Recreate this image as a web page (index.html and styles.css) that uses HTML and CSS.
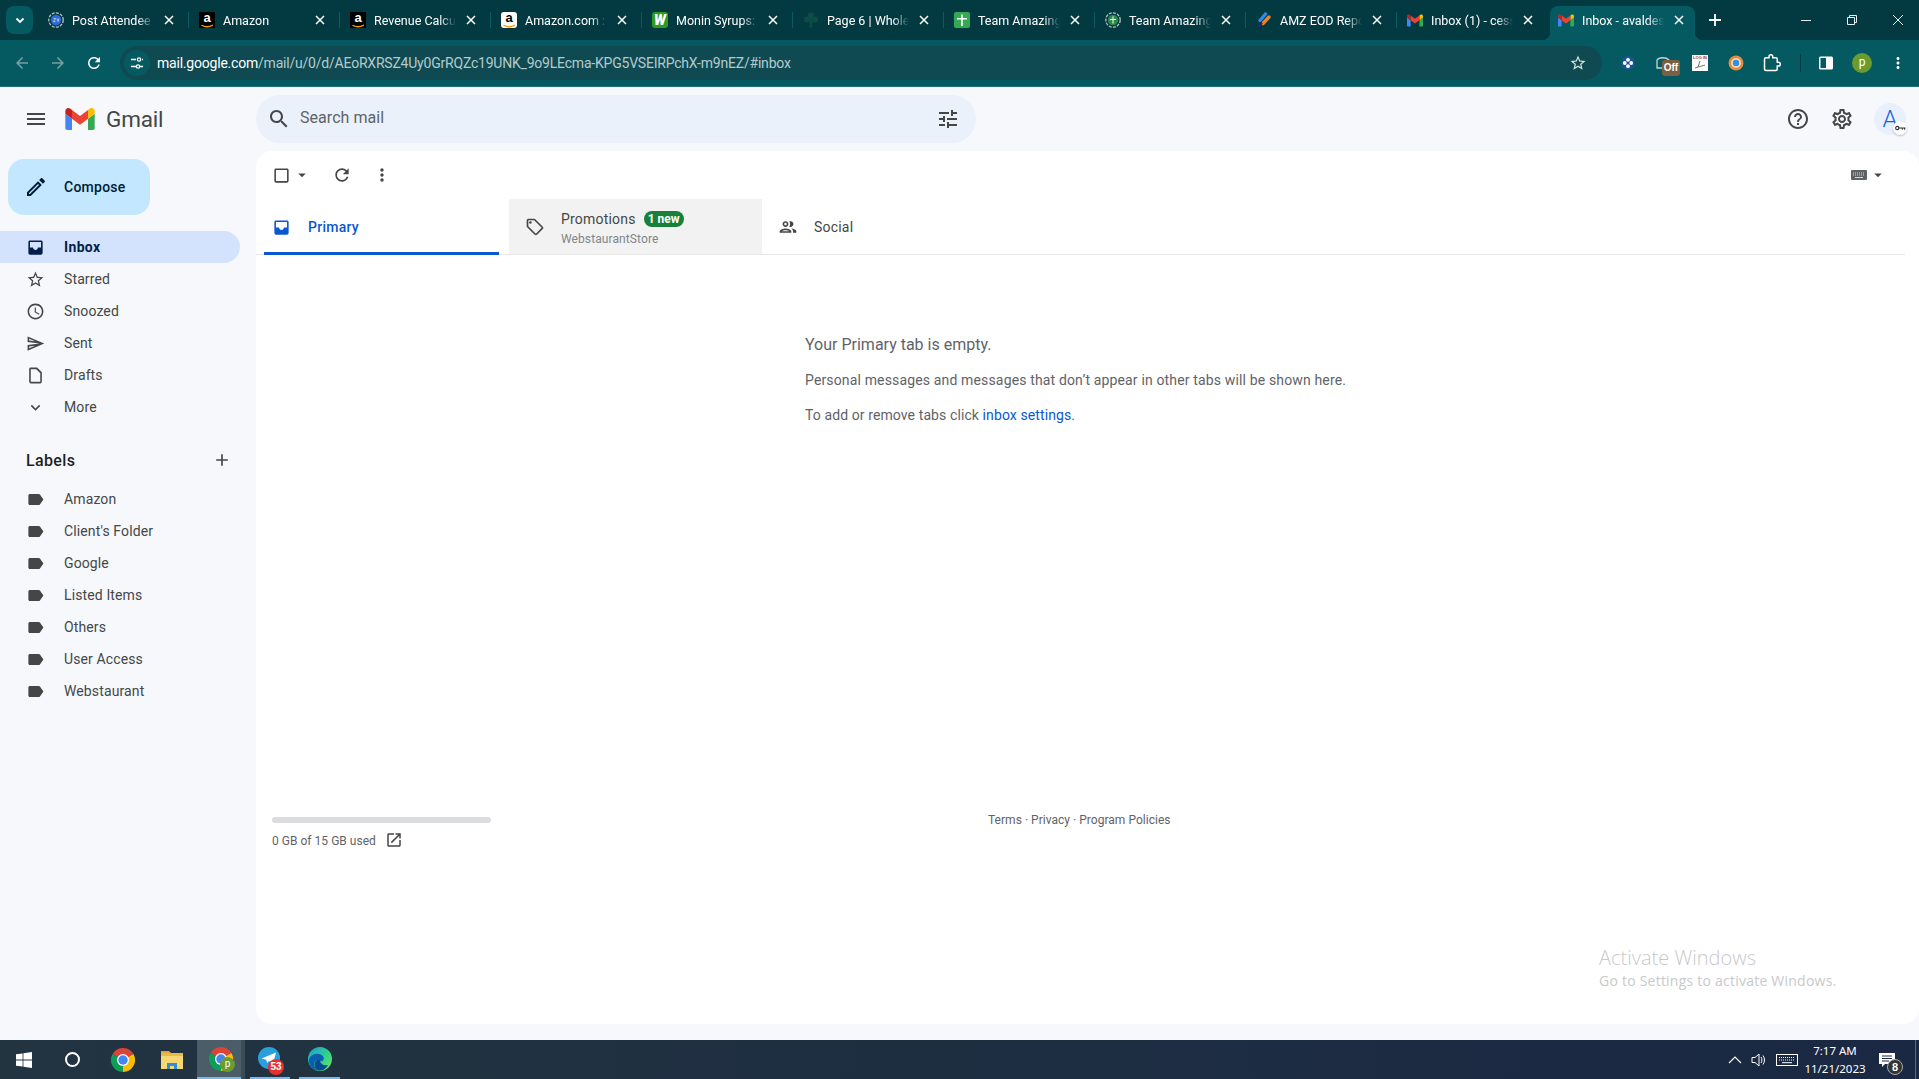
FILE: index.html
```html
<!DOCTYPE html>
<html lang="en">
<head>
<meta charset="utf-8">
<title>Inbox - Gmail</title>
<link rel="stylesheet" href="styles.css">
</head>
<body>
<svg class="sprite" xmlns="http://www.w3.org/2000/svg">
  <symbol id="i-m" viewBox="52 42 88 66"><path fill="#4285f4" d="M58 108h14V74L52 59v43c0 3.32 2.69 6 6 6"/><path fill="#34a853" d="M120 108h14c3.32 0 6-2.69 6-6V59l-20 15"/><path fill="#fbbc04" d="M120 48v26l20-15v-8c0-7.42-8.47-11.65-14.4-7.2"/><path fill="#ea4335" d="M72 74V48l24 18 24-18v26L96 92"/><path fill="#c5221f" d="M52 51v8l20 15V48l-5.6-4.2c-5.94-4.45-14.4-.22-14.4 7.2"/></symbol>
  <symbol id="i-chrome" viewBox="0 0 48 48"><path fill="#db4437" d="M24 24 3.2 12A24 24 0 0 1 44.8 12Z"/><path fill="#fbbc04" d="M24 24 44.8 12A24 24 0 0 1 24 48Z"/><path fill="#0f9d58" d="M24 24 24 48A24 24 0 0 1 3.2 12Z"/><circle cx="24" cy="24" r="12" fill="#fff"/><circle cx="24" cy="24" r="9.5" fill="#4285f4"/></symbol>
  <symbol id="i-x" viewBox="0 0 12 12"><path d="M2 2l8 8M10 2l-8 8" stroke="currentColor" stroke-width="1.5" fill="none"/></symbol>
  <symbol id="i-amz" viewBox="0 0 16 16"><path d="M2.5 13.2c3.5 2 7.5 2 11 0" stroke="#f90" stroke-width="1.3" fill="none"/><path d="M13.6 12.2l.4 2-1.9-.3" fill="#f90"/></symbol>
  <symbol id="i-menu" viewBox="0 0 24 24"><path d="M3 18h18v-2H3v2zm0-5h18v-2H3v2zm0-7v2h18V6H3z"/></symbol>
  <symbol id="i-search" viewBox="0 0 24 24"><path d="M15.5 14h-.79l-.28-.27C15.41 12.59 16 11.11 16 9.5 16 5.91 13.09 3 9.5 3S3 5.91 3 9.5 5.91 16 9.5 16c1.61 0 3.09-.59 4.23-1.57l.27.28v.79l5 4.99L20.49 19l-4.99-5zm-6 0C7.01 14 5 11.99 5 9.5S7.01 5 9.5 5 14 7.01 14 9.5 11.99 14 9.5 14z"/></symbol>
  <symbol id="i-tune" viewBox="0 0 24 24"><path d="M3 17v2h6v-2H3zM3 5v2h10V5H3zm10 16v-2h8v-2h-8v-2h-2v6h2zM7 9v2H3v2h4v2h2V9H7zm14 4v-2H11v2h10zm-6-4h2V7h4V5h-4V3h-2v6z"/></symbol>
  <symbol id="i-edit" viewBox="0 0 24 24"><path d="M14.06 9.02l.92.92L5.92 19H5v-.92l9.06-9.06M17.66 3c-.25 0-.51.1-.7.29l-1.83 1.83 3.75 3.75 1.83-1.83c.39-.39.39-1.02 0-1.41l-2.34-2.34c-.2-.2-.45-.29-.71-.29zm-3.6 3.19L3 17.25V21h3.75L17.81 9.94l-3.75-3.75z"/></symbol>
  <symbol id="i-inbox" viewBox="0 0 24 24"><path d="M19 3H5c-1.1 0-2 .9-2 2v14c0 1.1.9 2 2 2h14c1.1 0 2-.9 2-2V5c0-1.1-.9-2-2-2zm0 9h-4c0 1.66-1.35 3-3 3s-3-1.34-3-3H5V5h14v7z"/></symbol>
  <symbol id="i-star" viewBox="0 0 24 24"><path d="M22 9.24l-7.19-.62L12 2 9.19 8.63 2 9.24l5.46 4.73L5.82 21 12 17.27 18.18 21l-1.63-7.03L22 9.24zM12 15.4l-3.76 2.27 1-4.28-3.32-2.88 4.38-.38L12 6.1l1.71 4.04 4.38.38-3.32 2.88 1 4.28L12 15.4z"/></symbol>
  <symbol id="i-clock" viewBox="0 0 24 24"><path d="M11.99 2C6.47 2 2 6.48 2 12s4.47 10 9.99 10C17.52 22 22 17.52 22 12S17.52 2 11.99 2zM12 20c-4.42 0-8-3.58-8-8s3.58-8 8-8 8 3.58 8 8-3.58 8-8 8zm.5-13H11v6l5.25 3.15.75-1.23-4.5-2.67z"/></symbol>
  <symbol id="i-send" viewBox="0 0 24 24"><path d="M4.01 6.03l7.51 3.22-7.52-1 .01-2.22m7.5 8.72L4 17.97v-2.22l7.51-1M2.01 3L2 10l15 2-15 2 .01 7L23 12 2.01 3z"/></symbol>
  <symbol id="i-draft" viewBox="0 0 24 24"><path d="M6 2c-1.1 0-2 .9-2 2v16c0 1.1.9 2 2 2h12c1.1 0 2-.9 2-2V8l-6-6H6zm0 2h7l5 5v11H6V4z"/></symbol>
  <symbol id="i-more" viewBox="0 0 24 24"><path d="M16.59 8.59L12 13.17 7.41 8.59 6 10l6 6 6-6z"/></symbol>
  <symbol id="i-add" viewBox="0 0 24 24"><path d="M19 13h-6v6h-2v-6H5v-2h6V5h2v6h6v2z"/></symbol>
  <symbol id="i-label" viewBox="0 0 24 24"><path d="M17.63 5.84C17.27 5.33 16.67 5 16 5L5 5.01C3.9 5.01 3 5.9 3 7v10c0 1.1.9 1.99 2 1.99L16 19c.67 0 1.27-.33 1.63-.84L22 12l-4.37-6.16z"/></symbol>
  <symbol id="i-refresh" viewBox="0 0 24 24"><path d="M17.65 6.35C16.2 4.9 14.21 4 12 4c-4.42 0-7.99 3.58-7.99 8s3.57 8 7.99 8c3.73 0 6.84-2.55 7.73-6h-2.08c-.82 2.33-3.04 4-5.65 4-3.31 0-6-2.69-6-6s2.69-6 6-6c1.66 0 3.14.69 4.22 1.78L13 11h7V4l-2.35 2.35z"/></symbol>
  <symbol id="i-vert" viewBox="0 0 24 24"><path d="M12 8c1.1 0 2-.9 2-2s-.9-2-2-2-2 .9-2 2 .9 2 2 2zm0 2c-1.1 0-2 .9-2 2s.9 2 2 2 2-.9 2-2-.9-2-2-2zm0 6c-1.1 0-2 .9-2 2s.9 2 2 2 2-.9 2-2-.9-2-2-2z"/></symbol>
  <symbol id="i-check" viewBox="0 0 24 24"><path d="M19 5v14H5V5h14m0-2H5c-1.1 0-2 .9-2 2v14c0 1.1.9 2 2 2h14c1.1 0 2-.9 2-2V5c0-1.1-.9-2-2-2z"/></symbol>
  <symbol id="i-drop" viewBox="0 0 24 24"><path d="M7 10l5 5 5-5z"/></symbol>
  <symbol id="i-tag" viewBox="0 0 24 24"><path d="M21.41 11.58l-9-9C12.05 2.22 11.55 2 11 2H4c-1.1 0-2 .9-2 2v7c0 .55.22 1.05.59 1.42l9 9c.36.36.86.58 1.41.58s1.05-.22 1.41-.59l7-7c.37-.36.59-.86.59-1.41s-.23-1.06-.59-1.42zM13 20.01L4 11V4h7v-.01l9 9-7 7.02z"/><circle cx="6.5" cy="6.5" r="1.5"/></symbol>
  <symbol id="i-people" viewBox="0 0 24 24"><path d="M9 13.75c-2.34 0-7 1.17-7 3.5V19h14v-1.75c0-2.33-4.66-3.5-7-3.5zM4.34 17c.84-.58 2.87-1.25 4.66-1.25s3.82.67 4.66 1.25H4.34zM9 12c1.93 0 3.5-1.57 3.5-3.5S10.93 5 9 5 5.5 6.57 5.5 8.5 7.07 12 9 12zm0-5c.83 0 1.5.67 1.5 1.5S9.83 10 9 10s-1.5-.67-1.5-1.5S8.17 7 9 7zm7.04 6.81c1.16.84 1.96 1.96 1.96 3.44V19h4v-1.75c0-2.02-3.5-3.17-5.96-3.44zM15 12c1.93 0 3.5-1.57 3.5-3.5S16.93 5 15 5c-.54 0-1.04.13-1.5.35.63.89 1 1.98 1 3.15s-.37 2.26-1 3.15c.46.22.96.35 1.5.35z"/></symbol>
  <symbol id="i-help" viewBox="0 0 24 24"><path d="M11 18h2v-2h-2v2zm1-16C6.48 2 2 6.48 2 12s4.48 10 10 10 10-4.48 10-10S17.52 2 12 2zm0 18c-4.41 0-8-3.59-8-8s3.59-8 8-8 8 3.59 8 8-3.59 8-8 8zm0-14c-2.21 0-4 1.79-4 4h2c0-1.1.9-2 2-2s2 .9 2 2c0 2-3 1.75-3 5h2c0-2.25 3-2.5 3-5 0-2.21-1.79-4-4-4z"/></symbol>
  <symbol id="i-gear" viewBox="0 0 24 24"><path d="M19.43 12.98c.04-.32.07-.64.07-.98 0-.34-.03-.66-.07-.98l2.11-1.65c.19-.15.24-.42.12-.64l-2-3.46c-.09-.16-.26-.25-.44-.25-.06 0-.12.01-.17.03l-2.49 1c-.52-.4-1.08-.73-1.69-.98l-.38-2.65C14.46 2.18 14.25 2 14 2h-4c-.25 0-.46.18-.49.42l-.38 2.65c-.61.25-1.17.59-1.69.98l-2.49-1c-.06-.02-.12-.03-.18-.03-.17 0-.34.09-.43.25l-2 3.46c-.13.22-.07.49.12.64l2.11 1.65c-.04.32-.07.65-.07.98 0 .33.03.66.07.98l-2.11 1.65c-.19.15-.24.42-.12.64l2 3.46c.09.16.26.25.44.25.06 0 .12-.01.17-.03l2.49-1c.52.4 1.08.73 1.69.98l.38 2.65c.03.24.24.42.49.42h4c.25 0 .46-.18.49-.42l.38-2.65c.61-.25 1.17-.59 1.69-.98l2.49 1c.06.02.12.03.18.03.17 0 .34-.09.43-.25l2-3.46c.12-.22.07-.49-.12-.64l-2.11-1.65zm-1.98-1.71c.04.31.05.52.05.73 0 .21-.02.43-.05.73l-.14 1.13.89.7 1.08.84-.7 1.21-1.27-.51-1.04-.42-.9.68c-.43.32-.84.56-1.25.73l-1.06.43-.16 1.13-.2 1.35h-1.4l-.19-1.35-.16-1.13-1.06-.43c-.43-.18-.83-.41-1.23-.71l-.91-.7-1.06.43-1.27.51-.7-1.21 1.08-.84.89-.7-.14-1.13c-.03-.31-.05-.54-.05-.74s.02-.43.05-.73l.14-1.13-.89-.7-1.08-.84.7-1.21 1.27.51 1.04.42.9-.68c.43-.32.84-.56 1.25-.73l1.06-.43.16-1.13.2-1.35h1.39l.19 1.35.16 1.13 1.06.43c.43.18.83.41 1.23.71l.91.7 1.06-.43 1.27-.51.7 1.21-1.07.85-.89.7.14 1.13zM12 8c-2.21 0-4 1.79-4 4s1.79 4 4 4 4-1.79 4-4-1.79-4-4-4zm0 6c-1.1 0-2-.9-2-2s.9-2 2-2 2 .9 2 2-.9 2-2 2z"/></symbol>
  <symbol id="i-open" viewBox="0 0 24 24"><path d="M19 19H5V5h7V3H5c-1.11 0-2 .9-2 2v14c0 1.1.89 2 2 2h14c1.1 0 2-.9 2-2v-7h-2v7zM14 3v2h3.59l-9.83 9.83 1.41 1.41L19 6.41V10h2V3h-7z"/></symbol>
  <symbol id="i-back" viewBox="0 0 24 24"><path d="M20 11H7.83l5.59-5.59L12 4l-8 8 8 8 1.41-1.41L7.83 13H20v-2z"/></symbol>
  <symbol id="i-fwd" viewBox="0 0 24 24"><path d="M12 4l-1.41 1.41L16.17 11H4v2h12.17l-5.58 5.59L12 20l8-8z"/></symbol>
</svg>

<div class="tabstrip">
  <div class="tab-search"><svg class="caret-w" viewBox="0 0 12 12"><path d="M2.5 4.5 6 8l3.5-3.5" stroke="#fff" stroke-width="1.8" fill="none"/></svg></div>

  <div class="tab">
    <svg class="fav" viewBox="0 0 16 16"><circle cx="8" cy="8" r="7.2" fill="none" stroke="#b8c2c6" stroke-width="1.3" stroke-dasharray="3 1.2"/><circle cx="8" cy="8" r="5.2" fill="#2d6bd6"/><path d="M5.5 6.5h2l-2 3h2M9 6.5l1 3 1-3" stroke="#dfe8fb" stroke-width=".7" fill="none"/></svg>
    <span class="tab-title">Post Attendee -</span>
    <svg class="tab-x"><use href="#i-x"/></svg><span class="tab-sep"></span>
  </div>
  <div class="tab">
    <span class="fav fav-amz"><span class="fav-a">a</span><svg class="fav-smile"><use href="#i-amz"/></svg></span>
    <span class="tab-title">Amazon</span>
    <svg class="tab-x"><use href="#i-x"/></svg><span class="tab-sep"></span>
  </div>
  <div class="tab">
    <span class="fav fav-amz"><span class="fav-a">a</span><svg class="fav-smile"><use href="#i-amz"/></svg></span>
    <span class="tab-title">Revenue Calcul</span>
    <svg class="tab-x"><use href="#i-x"/></svg><span class="tab-sep"></span>
  </div>
  <div class="tab">
    <span class="fav fav-amz fav-amz-light"><span class="fav-a">a</span><svg class="fav-smile"><use href="#i-amz"/></svg></span>
    <span class="tab-title">Amazon.com : I</span>
    <svg class="tab-x"><use href="#i-x"/></svg><span class="tab-sep"></span>
  </div>
  <div class="tab">
    <span class="fav fav-w">W</span>
    <span class="tab-title">Monin Syrups: I</span>
    <svg class="tab-x"><use href="#i-x"/></svg><span class="tab-sep"></span>
  </div>
  <div class="tab">
    <svg class="fav" viewBox="0 0 16 16"><g fill="#0c4d45"><circle cx="8" cy="3.6" r="3"/><circle cx="4" cy="7.6" r="3"/><circle cx="12" cy="7.6" r="3"/><circle cx="8" cy="8" r="3"/><path d="M7.2 9h1.6l.8 6.5H6.4z"/></g></svg>
    <span class="tab-title">Page 6 | Whole</span>
    <svg class="tab-x"><use href="#i-x"/></svg><span class="tab-sep"></span>
  </div>
  <div class="tab">
    <svg class="fav" viewBox="0 0 16 16"><rect width="16" height="16" rx="2" fill="#34a853"/><path d="M7.2 2.5h1.6V6H13v1.6H8.8V14H7.2V7.6H3V6h4.2z" fill="#fff"/></svg>
    <span class="tab-title">Team Amazing</span>
    <svg class="tab-x"><use href="#i-x"/></svg><span class="tab-sep"></span>
  </div>
  <div class="tab">
    <svg class="fav" viewBox="0 0 16 16"><circle cx="8" cy="8" r="7.2" fill="none" stroke="#b8c2c6" stroke-width="1.3" stroke-dasharray="3 1.2"/><circle cx="8" cy="8" r="5.2" fill="#2c8a4a"/><path d="M7.5 4.5h1V7H11v1H8.5v3.5h-1V8H5V7h2.5z" fill="#fff"/></svg>
    <span class="tab-title">Team Amazing</span>
    <svg class="tab-x"><use href="#i-x"/></svg><span class="tab-sep"></span>
  </div>
  <div class="tab">
    <svg class="fav" viewBox="0 0 16 16"><path d="M4 8.5 9.5 2" stroke="#2b8ce6" stroke-width="3.4" stroke-linecap="round"/><path d="M7 11.5 13 5" stroke="#f58220" stroke-width="3.4" stroke-linecap="round"/><path d="M2 14.5l3-3" stroke="#1c2a66" stroke-width="3" stroke-linecap="round"/></svg>
    <span class="tab-title">AMZ EOD Repo</span>
    <svg class="tab-x"><use href="#i-x"/></svg><span class="tab-sep"></span>
  </div>
  <div class="tab">
    <svg class="fav fav-m"><use href="#i-m"/></svg>
    <span class="tab-title">Inbox (1) - cess</span>
    <svg class="tab-x"><use href="#i-x"/></svg><span class="tab-sep tab-sep-off"></span>
  </div>
  <div class="tab tab-active">
    <svg class="fav fav-m"><use href="#i-m"/></svg>
    <span class="tab-title">Inbox - avaldes</span>
    <svg class="tab-x"><use href="#i-x"/></svg>
  </div>
  <svg class="tab-new" viewBox="0 0 16 16"><path d="M8 2v12M2 8h12" stroke="#fff" stroke-width="1.8"/></svg>
  <div class="win-controls">
    <svg class="win-icon" viewBox="0 0 12 12"><path d="M1 6.5h10" stroke="#e6eeee" stroke-width="1"/></svg>
    <svg class="win-icon" viewBox="0 0 12 12"><path d="M3.5 3V1.5h7v7H9M1.5 3.5h7v7h-7z" stroke="#e6eeee" stroke-width="1" fill="none"/></svg>
    <svg class="win-icon" viewBox="0 0 12 12"><path d="M1 1l10 10M11 1 1 11" stroke="#e6eeee" stroke-width="1"/></svg>
  </div>
</div>

<div class="toolbar">
  <svg class="nav-ico nav-dim"><use href="#i-back"/></svg>
  <svg class="nav-ico nav-dim"><use href="#i-fwd"/></svg>
  <svg class="nav-ico"><use href="#i-refresh"/></svg>
  <div class="omnibox">
    <span class="site-info"><svg viewBox="0 0 16 16" class="site-ico"><path d="M2 4.5h5M11 11.5h3M7 11.5H2M14 4.5h-1" stroke="#fff" stroke-width="1.3" fill="none"/><circle cx="10" cy="4.5" r="1.7" stroke="#fff" stroke-width="1.2" fill="none"/><circle cx="9" cy="11.5" r="1.7" stroke="#fff" stroke-width="1.2" fill="none"/></svg></span>
    <span class="url"><span class="url-host">mail.google.com</span>/mail/u/0/d/AEoRXRSZ4Uy0GrRQZc19UNK_9o9LEcma-KPG5VSEIRPchX-m9nEZ/#inbox</span>
    <svg class="omni-star"><use href="#i-star"/></svg>
  </div>
  <div class="ext-cells">
    <span class="ext"><svg class="ext-16" viewBox="0 0 16 16"><circle cx="8" cy="8" r="7" fill="#1a5591"/><g fill="#fff"><circle cx="8" cy="4.8" r="1.9"/><circle cx="8" cy="11.2" r="1.9"/><circle cx="4.8" cy="8" r="1.9"/><circle cx="11.2" cy="8" r="1.9"/></g></svg></span>
    <span class="ext ext-off"><svg class="ext-16" viewBox="0 0 16 16"><path d="M1 5c2-3 9-3 12 0v8H1z" fill="none" stroke="#c9d3d4" stroke-width="1.3"/></svg><span class="off-badge">Off</span></span>
    <span class="ext"><span class="login-ext">LOG IN<svg class="login-lines" viewBox="0 0 16 8"><path d="M8 0 6 6M3 7l10-3" stroke="#555" stroke-width=".8"/></svg></span></span>
    <span class="ext"><svg class="ext-16" viewBox="0 0 16 16"><circle cx="8" cy="8" r="7.5" fill="#e88a3c"/><circle cx="8" cy="8" r="5" fill="#fbd9b8"/><circle cx="8" cy="8" r="3.2" fill="#2f8fe0"/></svg></span>
    <span class="ext"><svg class="ext-18" viewBox="0 0 24 24"><path d="M20.5 11H19V7c0-1.1-.9-2-2-2h-4V3.5C13 2.12 11.88 1 10.5 1S8 2.12 8 3.5V5H4c-1.1 0-1.99.9-1.99 2v13c0 1.1.9 2 2 2H17c1.1 0 2-.9 2-2v-4h1.5c1.38 0 2.5-1.12 2.5-2.5S21.88 11 20.5 11z" fill="none" stroke="#fff" stroke-width="2"/></svg></span>
  </div>
  <span class="tool-sep"></span>
  <div class="ext-cells">
    <span class="ext"><svg class="ext-18" viewBox="0 0 18 18"><rect x="2" y="2.5" width="14" height="13" rx="1.5" fill="#fff"/><rect x="3.5" y="4" width="5.5" height="10" fill="#055a62"/></svg></span>
    <span class="ext"><span class="profile-dot">p</span></span>
    <span class="ext"><svg class="ext-18 dots"><use href="#i-vert"/></svg></span>
  </div>
</div>

<div class="app">
  <div class="brand">
    <svg class="ico-24 ink"><use href="#i-menu"/></svg>
    <svg class="gmail-m"><use href="#i-m"/></svg>
    <span class="gmail-word">Gmail</span>
  </div>
  <div class="top">
    <div class="search">
      <svg class="ico-24 ink"><use href="#i-search"/></svg>
      <span class="search-text">Search mail</span>
      <svg class="ico-24 ink search-tune"><use href="#i-tune"/></svg>
    </div>
    <div class="top-right">
      <svg class="ico-24 ink"><use href="#i-help"/></svg>
      <svg class="ico-24 ink"><use href="#i-gear"/></svg>
      <span class="avatar">A<span class="avatar-key"><svg viewBox="0 0 12 6" class="key-ico"><circle cx="2.5" cy="3" r="1.8" fill="none" stroke="#333" stroke-width="1.2"/><path d="M4 3h7.5M8 3v2M10.5 3v2" stroke="#333" stroke-width="1.2"/></svg></span></span>
    </div>
  </div>

  <aside class="sidebar">
    <div class="compose"><svg class="ico-24 compose-ico"><use href="#i-edit"/></svg><span>Compose</span></div>
    <nav class="nav">
      <div class="row row-active"><svg class="ico-19"><use href="#i-inbox"/></svg><span>Inbox</span></div>
      <div class="row"><svg class="ico-19"><use href="#i-star"/></svg><span>Starred</span></div>
      <div class="row"><svg class="ico-19"><use href="#i-clock"/></svg><span>Snoozed</span></div>
      <div class="row"><svg class="ico-19"><use href="#i-send"/></svg><span>Sent</span></div>
      <div class="row"><svg class="ico-19"><use href="#i-draft"/></svg><span>Drafts</span></div>
      <div class="row"><svg class="ico-19"><use href="#i-more"/></svg><span>More</span></div>
    </nav>
    <div class="labels-head"><span>Labels</span><svg class="ico-20 ink"><use href="#i-add"/></svg></div>
    <nav class="nav nav-labels">
      <div class="row"><svg class="ico-19"><use href="#i-label"/></svg><span>Amazon</span></div>
      <div class="row"><svg class="ico-19"><use href="#i-label"/></svg><span>Client's Folder</span></div>
      <div class="row"><svg class="ico-19"><use href="#i-label"/></svg><span>Google</span></div>
      <div class="row"><svg class="ico-19"><use href="#i-label"/></svg><span>Listed Items</span></div>
      <div class="row"><svg class="ico-19"><use href="#i-label"/></svg><span>Others</span></div>
      <div class="row"><svg class="ico-19"><use href="#i-label"/></svg><span>User Access</span></div>
      <div class="row"><svg class="ico-19"><use href="#i-label"/></svg><span>Webstaurant</span></div>
    </nav>
  </aside>

  <main class="card">
    <div class="card-tools">
      <svg class="ico-19 ink"><use href="#i-check"/></svg>
      <svg class="ico-18 ink tool-drop"><use href="#i-drop"/></svg>
      <svg class="ico-20 ink tool-refresh"><use href="#i-refresh"/></svg>
      <svg class="ico-20 ink tool-more"><use href="#i-vert"/></svg>
      <svg class="kbd" viewBox="0 0 16 10"><rect width="16" height="10" rx="1" fill="#5f6368"/><path d="M2 3h12M2 5h12" stroke="#d5d7da" stroke-width="1" stroke-dasharray="1 1"/><path d="M4 7.5h8" stroke="#d5d7da" stroke-width="1"/></svg>
      <svg class="ico-18 ink kbd-drop"><use href="#i-drop"/></svg>
    </div>
    <div class="tabs">
      <div class="mtab mtab-primary"><svg class="ico-19"><use href="#i-inbox"/></svg><span>Primary</span></div>
      <div class="mtab mtab-promo">
        <svg class="ico-20 ink"><use href="#i-tag"/></svg>
        <div class="promo-col">
          <div class="promo-title"><span>Promotions</span><span class="badge">1 new</span></div>
          <div class="promo-sub">WebstaurantStore</div>
        </div>
      </div>
      <div class="mtab mtab-social"><svg class="ico-20 ink"><use href="#i-people"/></svg><span>Social</span></div>
    </div>
    <div class="empty">
      <p class="empty-title">Your Primary tab is empty.</p>
      <p class="empty-line">Personal messages and messages that don’t appear in other tabs will be shown here.</p>
      <p class="empty-line empty-line-2">To add or remove tabs click <span class="link">inbox settings</span>.</p>
    </div>
    <div class="foot">
      <div class="storage">
        <div class="storage-bar"></div>
        <div class="storage-text"><span>0 GB of 15 GB used</span><svg class="ico-18 ink"><use href="#i-open"/></svg></div>
      </div>
      <div class="foot-links">Terms · Privacy · Program Policies</div>
    </div>
    <div class="activate">
      <div class="activate-h">Activate Windows</div>
      <div class="activate-s">Go to Settings to activate Windows.</div>
    </div>
  </main>
</div>

<footer class="taskbar">
  <span class="tb-cell"><svg class="tb-win" viewBox="0 0 16 16"><path d="M0 2.3 6.6 1.4v6.2H0zM7.4 1.3 16 0v7.6H7.4zM0 8.4h6.6v6.2L0 13.7zM7.4 8.4H16V16l-8.6-1.3z" fill="#fff"/></svg></span>
  <span class="tb-cell"><span class="cortana"></span></span>
  <span class="tb-cell tb-chrome"><svg class="tb-ico"><use href="#i-chrome"/></svg></span>
  <span class="tb-cell tb-folder"><svg class="tb-ico" viewBox="0 0 24 24"><path d="M1 3h8l2 2h-10z" fill="#e2a832"/><rect x="1" y="5" width="22" height="16" fill="#f7d774"/><rect x="1" y="5" width="22" height="3" fill="#eab94b"/><path d="M7 21v-6h10v6h-3v-3h-4v3z" fill="#2d8fdb"/></svg></span>
  <span class="tb-active"><svg class="tb-ico"><use href="#i-chrome"/></svg><span class="tb-p">p</span></span>
  <span class="tb-divider"></span>
  <span class="tb-open tb-telegram"><svg class="tb-ico" viewBox="0 0 24 24"><circle cx="11" cy="11" r="11" fill="#2a9fdc"/><path d="M3.5 11.5 18 5.5 15 17l-4-3-2 2-.7-3.2z" fill="#fff"/></svg><span class="tb-badge">53</span></span>
  <span class="tb-open tb-edge"><svg class="tb-ico" viewBox="0 0 24 24"><defs><linearGradient id="edgeg" x1="0" y1="0" x2="1" y2="1"><stop offset="0" stop-color="#1f9ad6"/><stop offset=".55" stop-color="#2ed38a"/><stop offset="1" stop-color="#7fe05a"/></linearGradient></defs><circle cx="12" cy="12" r="12" fill="url(#edgeg)"/><path d="M1 14c0-5 5-8 10-7 4 .8 6 4 4 6.5-1 1.2-3 1-3-.5-3-1-6 1-6 4.5 0 2.5 2 5 5 6-6 0-10-4-10-9.5z" fill="#0b5fb0"/><path d="M12 13c0 4 4 6 8 5-2 3.5-5 6-9 5.5-3-1-5-4-4.500-7 .5-3 4-5 5.500-3.500z" fill="#0a4a94"/></svg></span>
  <div class="tray">
    <svg class="tray-chev" viewBox="0 0 14 8"><path d="M1 7l6-6 6 6" stroke="#fff" stroke-width="1.1" fill="none"/></svg>
    <svg class="tray-vol" viewBox="0 0 16 16"><path d="M1 5.5h3L8 2v12l-4-3.500H1z" stroke="#fff" fill="none"/><path d="M10 5c1.2 1.8 1.2 4.2 0 6M12 3.500c2 2.700 2 6.300 0 9" stroke="#fff" fill="none"/></svg>
    <svg class="tray-kbd" viewBox="0 0 22 12"><rect x=".5" y=".5" width="21" height="11" fill="none" stroke="#fff"/><path d="M3 3.500h16M3 6h16" stroke="#fff" stroke-dasharray="1 1"/><path d="M6 8.700h10" stroke="#fff"/></svg>
    <div class="clock"><div>7:17 AM</div><div>11/21/2023</div></div>
    <span class="notif"><svg class="notif-ico" viewBox="0 0 16 16"><path d="M0 1h16v11H6l-3 3v-3H0z" fill="#fff"/><path d="M3 4h10M3 6.500h10M3 9h7" stroke="#1a2843"/></svg><span class="notif-badge">8</span></span>
    <span class="tb-end"></span>
  </div>
</footer>
</body>
</html>
```

FILE: styles.css
```css
* { box-sizing: border-box; }
html, body { margin: 0; height: 100%; }
body {
  width: 1919px; height: 1079px; overflow: hidden;
  display: flex; flex-direction: column;
  font-family: Roboto, "Liberation Sans", sans-serif;
  background: #f6f8fc; color: #444746;
}
p { margin: 0; }
svg { display: block; flex: none; }
.sprite { display: none; }

/* icon sizes */
.ico-24 { width: 24px; height: 24px; }
.ico-20 { width: 20px; height: 20px; }
.ico-19 { width: 19px; height: 19px; }
.ico-18 { width: 18px; height: 18px; }
.ink { fill: #444746; }

/* browser tab strip */
.tabstrip { height: 40px; flex: none; display: flex; align-items: flex-start; background: #033a42; padding-left: 6px; color: #fff; font: 12.5px Roboto, "Liberation Sans", sans-serif; }
.tab-search { width: 27px; height: 28px; margin: 6px 5px 0 0; border-radius: 8px; background: #055a62; display: flex; align-items: center; justify-content: center; }
.caret-w { width: 12px; height: 12px; }
.tab { width: 151px; height: 34px; margin-top: 6px; padding-left: 10px; padding-bottom: 6px; flex: none; display: flex; align-items: center; }
.tab-active { position: relative; width: 145px; margin-left: 2px; margin-right: 4px; padding-left: 8px; background: #055a62; border-radius: 8px 8px 0 0; }
.tab-active::before, .tab-active::after { content: ""; position: absolute; bottom: 0; width: 8px; height: 8px; }
.tab-active::before { left: -8px; background: radial-gradient(circle at 0 0, transparent 8px, #055a62 8.5px); }
.tab-active::after { right: -8px; background: radial-gradient(circle at 100% 0, transparent 8px, #055a62 8.5px); }
.fav { width: 16px; height: 16px; flex: none; }
.fav-m { height: 13px; }
.fav-amz { position: relative; display: block; background: #000; overflow: hidden; }
.fav-amz-light { background: #fff; border-radius: 3px; }
.fav-a { display: block; text-align: center; color: #fff; font: 700 13px/12px "Liberation Sans", sans-serif; }
.fav-amz-light .fav-a { color: #000; }
.fav-smile { position: absolute; left: 0; top: 0; width: 16px; height: 16px; }
.fav-w { display: block; background: #2e9b22; border-radius: 3px; color: #fff; text-align: center; font: italic 900 14px/16px Roboto, sans-serif; }
.tab-title { width: 82px; margin: 2px 0 0 8px; white-space: nowrap; line-height: 16px; -webkit-mask-image: linear-gradient(90deg, #000 80%, transparent 100%); mask-image: linear-gradient(90deg, #000 80%, transparent 100%); }
.tab-x { width: 14px; height: 14px; margin-left: 8px; padding: 1px; color: #fff; }
.tab-sep { width: 1px; height: 16px; margin-left: auto; background: #0c5a62; }
.tab-sep-off { background: transparent; }
.tab-new { width: 16px; height: 16px; margin: 12px 0 0 8px; }
.win-controls { margin-left: auto; margin-top: 14px; padding-right: 15px; display: flex; gap: 34px; }
.win-icon { width: 12px; height: 12px; }

/* browser toolbar */
.toolbar { height: 47px; flex: none; display: flex; align-items: center; background: #055a62; border-bottom: 1px solid #1f6f76; padding: 0 0 1px 13px; }
.nav-ico { width: 18px; height: 18px; fill: #fff; margin-right: 18px; }
.nav-dim { fill: #76a0a4; }
.omnibox { width: 1482px; height: 34px; margin-left: -1px; border-radius: 17px; background: #0f4a52; display: flex; align-items: center; padding: 0 15px 0 4px; }
.site-info { width: 26px; height: 26px; border-radius: 50%; background: #055a62; display: flex; align-items: center; justify-content: center; }
.site-ico { width: 16px; height: 16px; }
.url { margin-left: 7px; font: 14px Roboto, "Liberation Sans", sans-serif; letter-spacing: -.21px; color: #b4cacd; white-space: nowrap; }
.url-host { color: #fff; }
.omni-star { width: 18px; height: 18px; margin-left: auto; fill: #d8e2e3; }
.ext-cells { display: flex; }
.omnibox + .ext-cells { margin-left: 8px; }
.ext { position: relative; width: 36px; height: 24px; display: flex; align-items: center; justify-content: center; }
.ext-16 { width: 16px; height: 16px; }
.ext-18 { width: 18px; height: 18px; }
.dots { fill: #fff; }
.off-badge { position: absolute; left: 16px; top: 9px; width: 18px; height: 16px; border-radius: 3px; background: #7a5f43; color: #fff; font: 700 10px/16px "Liberation Sans", sans-serif; text-align: center; }
.login-ext { width: 16px; height: 16px; background: #fff; color: #a5323a; font: 700 4px/6px "Liberation Sans", sans-serif; text-align: center; white-space: nowrap; }
.login-lines { width: 16px; height: 8px; }
.tool-sep { width: 1px; height: 18px; margin: 0 7px 0 10px; background: #033a42; }
.profile-dot { width: 20px; height: 20px; border-radius: 50%; background: #6a9b2f; color: #fff; font: 12px/19px Roboto, sans-serif; text-align: center; }

/* gmail frame */
.app { position: relative; flex: 1; min-height: 0; display: grid; grid-template-columns: 256px 1fr; grid-template-rows: 64px 1fr; }
.brand { display: flex; align-items: center; padding-left: 24px; }
.gmail-m { width: 30px; height: 22px; margin-left: 17px; }
.gmail-word { margin-left: 11px; font: 400 22.5px Roboto, sans-serif; color: #444746; letter-spacing: -.2px; }
.top { display: flex; align-items: center; padding-right: 13px; }
.search { width: 720px; height: 48px; border-radius: 24px; background: #eaf1fb; display: flex; align-items: center; padding: 0 16px 0 11px; }
.search-text { margin: 0 0 3px 9px; font-size: 16px; letter-spacing: .05px; color: #5f6368; }
.search-tune { margin-left: auto; }
.top-right { margin-left: auto; display: flex; align-items: center; gap: 20px; }
.avatar { position: relative; width: 32px; height: 32px; border-radius: 50%; background: #e8f0fe; color: #1a5fe0; font: 300 24px/32px Roboto, sans-serif; text-align: center; }
.avatar-key { position: absolute; right: -1px; bottom: 0; width: 14px; height: 14px; border-radius: 50%; background: #fff; box-shadow: 0 1px 2px rgba(0,0,0,.25); display: flex; align-items: center; justify-content: center; }
.key-ico { width: 11px; height: 6px; }

/* sidebar */
.sidebar { padding-top: 8px; }
.compose { width: 142px; height: 56px; margin: 0 0 16px 8px; padding-left: 16px; border-radius: 16px; background: #c2e7ff; display: flex; align-items: center; gap: 16px; font-size: 14px; font-weight: 500; letter-spacing: .25px; color: #001d35; }
.compose-ico { fill: #001d35; }
.row { width: 240px; height: 32px; padding-left: 26px; display: flex; align-items: center; gap: 19px; font-size: 14px; letter-spacing: .12px; color: #444746; fill: #444746; border-radius: 0 16px 16px 0; }
.row-active { background: #d3e3fd; font-weight: 700; letter-spacing: .35px; color: #041e49; fill: #041e49; }
.labels-head { width: 232px; height: 24px; margin-top: 25px; padding-left: 26px; display: flex; align-items: center; justify-content: space-between; font-size: 16px; font-weight: 500; letter-spacing: .35px; color: #1f1f1f; }
.nav-labels { margin-top: 11px; }

/* main card */
.card { position: relative; margin-bottom: 16px; background: #fff; border-radius: 16px; display: flex; flex-direction: column; }
.card-tools { height: 48px; flex: none; display: flex; align-items: center; padding: 0 32px 0 16px; }
.tool-drop { margin-left: 2px; }
.tool-refresh { margin-left: 21px; }
.tool-more { margin-left: 20px; }
.kbd { width: 16px; height: 10px; margin-left: auto; }
.kbd-drop { margin-left: 2px; }
.tabs { height: 56px; flex: none; display: flex; margin-right: 14px; padding-left: 8px; border-bottom: 1px solid #e8e8e8; }
.mtab { display: flex; align-items: center; font-size: 14px; letter-spacing: .2px; }
.mtab-primary { width: 235px; height: 56px; padding-left: 8px; gap: 17px; color: #0b57d0; fill: #0b57d0; font-weight: 500; letter-spacing: .25px; border-bottom: 3px solid #0b57d0; }
.mtab-primary span { margin-top: 3px; }
.mtab-primary svg { margin-top: 3px; }
.mtab-promo { width: 253px; height: 55px; margin-left: 10px; padding-left: 16px; gap: 16px; background: #f2f2f2; }
.promo-col { display: flex; flex-direction: column; gap: 1px; padding-top: 4px; }
.promo-title { display: flex; align-items: center; gap: 8px; height: 20px; }
.badge { height: 16px; padding: 0 4px; border-radius: 8px; background: #188038; color: #fff; font: 700 12px/16px Roboto, sans-serif; letter-spacing: 0; }
.promo-sub { font-size: 12px; line-height: 18px; letter-spacing: .1px; color: #80868b; }
.mtab-social { padding-left: 16px; gap: 16px; }
.empty { margin: 78px 0 0 549px; color: #5f6368; }
.empty-title { font-size: 16px; line-height: 24px; }
.empty-line { margin-top: 13px; font-size: 14px; line-height: 20px; letter-spacing: .15px; }
.empty-line-2 { margin-top: 15px; letter-spacing: .1px; }
.link { color: #0b57d0; }
.foot { margin-top: 387px; display: flex; padding-left: 16px; font-size: 12px; line-height: 16px; letter-spacing: .03px; color: #5f6368; }
.storage { width: 219px; padding-top: 5px; }
.storage-bar { height: 6px; border-radius: 3px; background: #dadce0; }
.storage-text { display: flex; align-items: center; gap: 9px; margin-top: 10px; height: 16px; }
.storage-text svg { margin-top: -2px; }
.foot-links { margin-left: 497px; }
.activate { position: absolute; left: 1343px; top: 794px; color: #c9c9c9; font-family: "Open Sans", "Noto Sans", sans-serif; }
.activate-h { font-size: 20px; font-weight: 300; line-height: 26px; }
.activate-s { font-size: 14px; line-height: 19px; letter-spacing: .23px; }

/* windows taskbar */
.taskbar { height: 39px; flex: none; display: flex; align-items: stretch; background: linear-gradient(90deg, #223440, #1a2843); color: #fff; }
.tb-cell { width: 48px; display: flex; align-items: center; justify-content: center; }
.tb-chrome { margin-left: 3px; }
.tb-folder { margin-left: 1px; }
.tb-win { width: 16px; height: 16px; }
.tb-ico { width: 24px; height: 24px; }
.cortana { width: 15px; height: 15px; border: 2.5px solid #fff; border-radius: 50%; }
.tb-active { position: relative; width: 44px; margin-left: 1px; background: #4a5d68; border-bottom: 2px solid #76b9ed; display: flex; align-items: center; justify-content: center; padding-left: 4px; }
.tb-p { position: absolute; right: 6px; bottom: 5px; width: 15px; height: 15px; border-radius: 50%; background: #6a9b2f; font: 10px/14px Roboto, sans-serif; text-align: center; }
.tb-divider { width: 4px; background: #3b4c57; }
.tb-open { position: relative; border-bottom: 2px solid #76b9ed; display: flex; align-items: center; justify-content: center; }
.tb-telegram { width: 40px; margin-left: 5px; }
.tb-edge { width: 41px; margin-left: 9px; }
.tb-badge { position: absolute; left: 18px; top: 19px; width: 16px; height: 16px; border-radius: 50%; background: #e8312f; font: 700 10px/16px "Liberation Sans", sans-serif; text-align: center; }
.tray { margin-left: auto; display: flex; align-items: center; }
.tray-chev { width: 14px; height: 8px; }
.tray-vol { width: 16px; height: 16px; margin-left: 9px; }
.tray-kbd { width: 22px; height: 12px; margin-left: 9px; }
.clock { width: 64px; margin-left: 5px; font: 11.5px/18px "Noto Sans", sans-serif; text-align: center; white-space: nowrap; }
.notif { position: relative; width: 16px; margin-left: 12px; }
.notif-ico { width: 16px; height: 16px; }
.notif-badge { position: absolute; left: 8px; top: 7px; width: 16px; height: 16px; border-radius: 50%; background: #333; border: 1px solid #aaa; font: 700 11px/14px "Liberation Sans", sans-serif; text-align: center; }
.tb-end { width: 1px; height: 100%; margin-left: 20px; background: rgba(255,255,255,.3); margin-right: 3px; }
```
